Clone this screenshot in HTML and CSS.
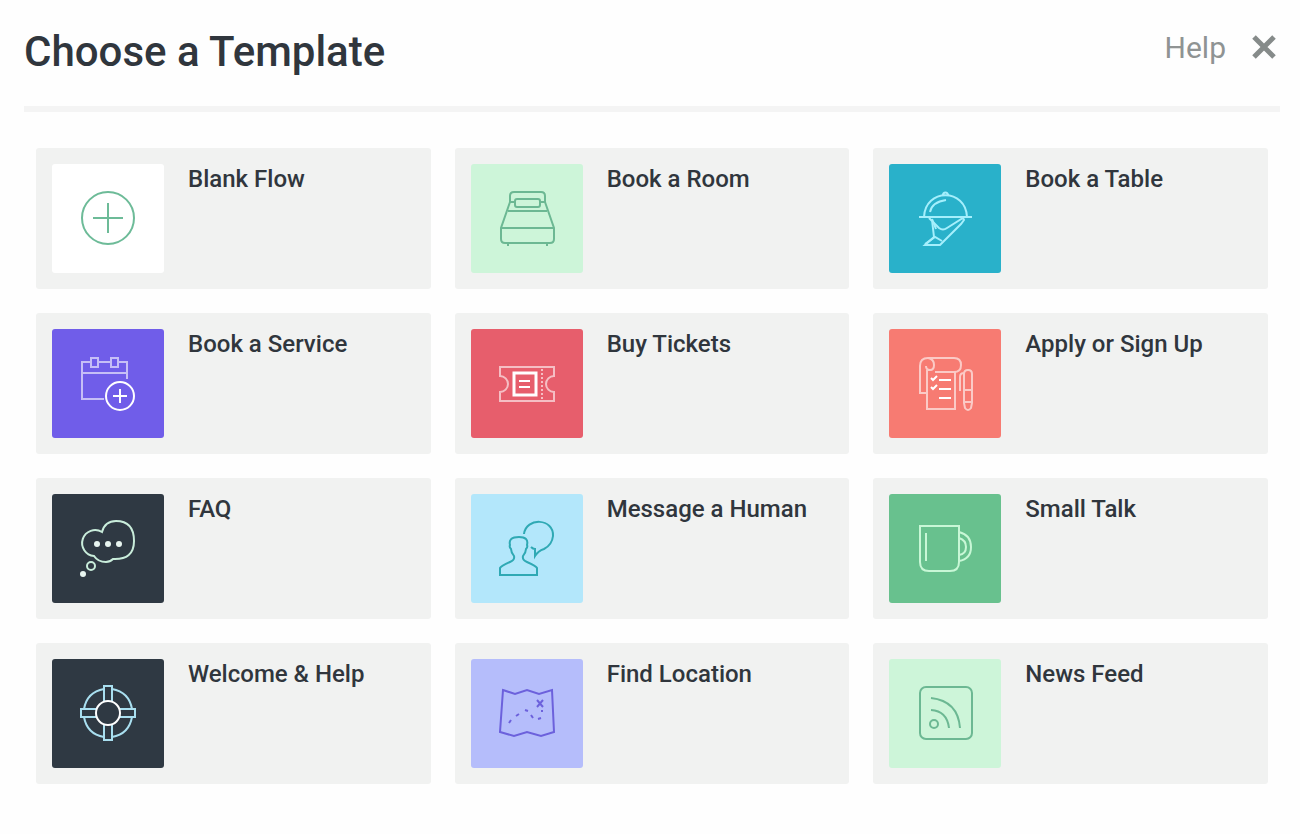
FILE: index.html
```html
<!DOCTYPE html>
<html lang="en">
<head>
  <meta charset="UTF-8" />
  <meta name="viewport" content="width=device-width, initial-scale=1" />
  <title>Choose a Template</title>
  <link rel="stylesheet" href="styles.css">
</head>
<body>
  <header class="header">
    <h1>Choose a Template</h1>
    <div class="actions">
      <a class="help" href="#help">Help</a>
      <button class="close" type="button" aria-label="Close">
        <svg viewBox="0 0 28 28"><path d="M4 4l20 20M24 4L4 24" /></svg>
      </button>
    </div>
  </header>

  <main class="templates">
    <a class="card" href="#blank">
      <span class="tile blank">
        <svg viewBox="0 0 56 57">
          <circle cx="28" cy="28" r="26" />
          <path d="M28 13v30M13 28h30" />
        </svg>
      </span>
      <span class="name">Blank Flow</span>
    </a>

    <a class="card" href="#room">
      <span class="tile mint">
        <svg viewBox="0 0 56 57">
          <path d="M11 12V6q0-4 4-4h27q4 0 4 4v6" />
          <path d="M11 12L2 38v11q0 4 4 4h45q4 0 4-4V38L46 12" />
          <path d="M11 12h5M41 12h5M9 21h39M2 38h53M9 53v3M48 53v3" />
          <rect x="16" y="9" width="25" height="8" rx="2" />
        </svg>
      </span>
      <span class="name">Book a Room</span>
    </a>

    <a class="card" href="#table">
      <span class="tile teal">
        <svg viewBox="0 0 56 57">
          <path d="M7 27C8-2 49-2 50 27M2 27h53M26 5a2 2 0 0 1 5 0" />
          <path d="M13 22q2-10 16-12" />
          <path d="M12 28l10 10q4 3 8 0l16-10 1 2-3 4-21 21H8l9-8-2-17" />
          <path d="M8 54l10-7 7 4M15 29l4 10" />
        </svg>
      </span>
      <span class="name">Book a Table</span>
    </a>

    <a class="card" href="#service">
      <span class="tile purple">
        <svg viewBox="0 0 56 57">
          <g class="soft">
            <path d="M24 44H2V7h8M18 7h12M38 7h9v17M2 18h45" />
            <rect x="11" y="3" width="7" height="9" />
            <rect x="31" y="3" width="7" height="9" />
          </g>
          <circle cx="40" cy="41" r="14" />
          <path d="M40 34v14M33 41h14" />
        </svg>
      </span>
      <span class="name">Book a Service</span>
    </a>

    <a class="card" href="#tickets">
      <span class="tile red">
        <svg viewBox="0 0 56 57">
          <g class="soft">
            <path d="M1 12h54v9a8 8 0 0 0 0 16v9H1v-9a8 8 0 0 0 0-16z" />
            <path stroke-dasharray="2 2" d="M43 14v31" />
          </g>
          <rect class="bold" x="15" y="18" width="22" height="22" />
          <path d="M20 26h11M20 32h11" />
        </svg>
      </span>
      <span class="name">Buy Tickets</span>
    </a>

    <a class="card" href="#apply">
      <span class="tile coral">
        <svg viewBox="0 0 56 57">
          <g class="soft">
            <path d="M9 38H3V11q0-8 8-8h26q7 0 7 7t-7 7H18" />
            <path d="M11 3q6 1 6 7 0 5-4 5-4 0-4-4M10 15v39h28V17" />
            <path d="M47 19q0-4 4-4t4 4v29l-1 5q-3 4-6 0l-1-5zM47 35h8M47 47h8M47 18q-4 0-4 4v14" />
          </g>
          <path d="M14 23l2 2 4-4M14 32l2 2 4-4M22 25h12M22 34h12M22 43h12" />
        </svg>
      </span>
      <span class="name">Apply or Sign Up</span>
    </a>

    <a class="card" href="#faq">
      <span class="tile dark">
        <svg viewBox="0 0 56 57">
          <path d="M22 12A13 13 0 1 0 14 36q4 6 12 6 4 0 7-3 21 1 21-18 0-20-18-20Q25 1 22 12z" />
          <circle cx="11" cy="46" r="4" />
          <g class="dots">
            <circle cx="17" cy="24" r="3" />
            <circle cx="28" cy="24" r="3" />
            <circle cx="39" cy="24" r="3" />
            <circle cx="3" cy="54" r="3" />
          </g>
        </svg>
      </span>
      <span class="name">FAQ</span>
    </a>

    <a class="card" href="#human">
      <span class="tile sky">
        <svg viewBox="0 0 56 57">
          <path d="M1 55v-7q1-2 10-6 5-2 4-6-3-4-3-7-2-2-1-4-2-8 9-8 10 0 8 8 1 2-1 4 0 3-3 7-1 4 4 6 9 4 10 6v7z" />
          <path d="M25 14C27-3 55-2 54 16q-1 9-9 13-6 2-9 7v-7q-2 0-4-2" />
        </svg>
      </span>
      <span class="name">Message a Human</span>
    </a>

    <a class="card" href="#talk">
      <span class="tile green">
        <svg viewBox="0 0 56 57">
          <path d="M3 6h39v36q0 9-9 9H12q-9 0-9-9zM9 13v28" />
          <path d="M42 12q12 3 12 15T42 41M42 18q7 2 7 9t-7 8" />
        </svg>
      </span>
      <span class="name">Small Talk</span>
    </a>

    <a class="card" href="#welcome">
      <span class="tile dark ring">
        <svg viewBox="0 0 56 57">
          <path d="M32 4q17 3 20 20M52 32q-3 17-20 20M24 52Q7 49 4 32M4 24Q7 7 24 4" />
          <path d="M24 17V1h8v16M24 39v16h8V39M17 24H1v8h16M39 24h16v8H39" />
          <circle class="hub" cx="28" cy="28" r="12" />
        </svg>
      </span>
      <span class="name">Welcome &amp; Help</span>
    </a>

    <a class="card" href="#location">
      <span class="tile lilac">
        <svg viewBox="0 0 56 57">
          <path d="M4 5l12 4 12-4 12 4 13-4 2 42-13 4-14-4-13 4-14-4z" />
          <path d="M10 38l2-3M17 31l3-2M26 25l3 1M32 30l2 3M39 34l3-1M43 27v-2M38 15l6 7M44 15l-6 7" />
        </svg>
      </span>
      <span class="name">Find Location</span>
    </a>

    <a class="card" href="#news">
      <span class="tile mint">
        <svg viewBox="0 0 56 57">
          <rect x="3" y="2" width="52" height="52" rx="6" />
          <circle cx="17" cy="39" r="4" />
          <path d="M14 25q16 1 18 18M14 13q27 3 29 30" />
        </svg>
      </span>
      <span class="name">News Feed</span>
    </a>
  </main>
</body>
</html>
```
FILE: styles.css
```css
* {
  box-sizing: border-box;
}

body {
  margin: 0;
  padding: 0 20px 48px 24px;
  font-family: Roboto, "Liberation Sans", sans-serif;
  background: #fefefe;
  color: #30363d;
}

/* ---------- header ---------- */
.header {
  display: flex;
  justify-content: space-between;
  align-items: flex-start;
  height: 112px;
  padding-top: 24px;
  border-bottom: 6px solid #f4f4f4;
}

h1 {
  margin: 0;
  font-size: 42px;
  line-height: 56px;
  font-weight: 500;
}

.actions {
  display: flex;
  align-items: center;
  gap: 24px;
  height: 46px;
}

.help {
  color: #8f9393;
  font-size: 30px;
  font-weight: 400;
  text-decoration: none;
}

.close {
  display: block;
  width: 28px;
  height: 28px;
  margin-right: 2px;
  padding: 0;
  border: 0;
  background: none;
  cursor: pointer;
}

.close svg {
  display: block;
  width: 28px;
  height: 28px;
  fill: none;
  stroke: #868b8a;
  stroke-width: 5;
}

/* ---------- template cards ---------- */
.templates {
  display: grid;
  grid-template-columns: repeat(3, 1fr);
  gap: 24px;
  padding: 36px 12px 0;
}

.card {
  display: flex;
  align-items: flex-start;
  gap: 24px;
  padding: 16px;
  border-radius: 3px;
  background: #f1f2f1;
  color: inherit;
  text-decoration: none;
}

.name {
  font-size: 24px;
  line-height: 30px;
  font-weight: 500;
}

.tile {
  display: flex;
  flex: none;
  align-items: center;
  justify-content: center;
  width: 112px;
  height: 109px;
  border-radius: 3px;
}

.tile svg {
  width: 56px;
  height: 57px;
  fill: none;
  stroke: currentColor;
  stroke-width: 2;
  overflow: visible;
}

.tile .bold {
  stroke-width: 3;
}

.soft {
  opacity: 0.6;
}

.tile .dots {
  fill: #e8f5f0;
  stroke: none;
}

.hub {
  stroke: #fff;
}

/* tile colours */
.blank  { background: #fff;    color: #6dbb98; }
.mint   { background: #cdf5d9; color: #6cb893; }
.teal   { background: #29b1ca; color: #a5effc; }
.purple { background: #705de9; color: #fff; }
.red    { background: #e75e6c; color: #fff; }
.coral  { background: #f77b72; color: #fff; }
.dark   { background: #2f3943; color: #c9eddb; }
.ring   { color: #a9dff0; }
.sky    { background: #b3e7fb; color: #2fa9b4; }
.green  { background: #68c18e; color: #c8f7d6; }
.lilac  { background: #b5bdfb; color: #6c61dc; }

@media (max-width: 900px) {
  .templates {
    grid-template-columns: 1fr;
  }
}
```
